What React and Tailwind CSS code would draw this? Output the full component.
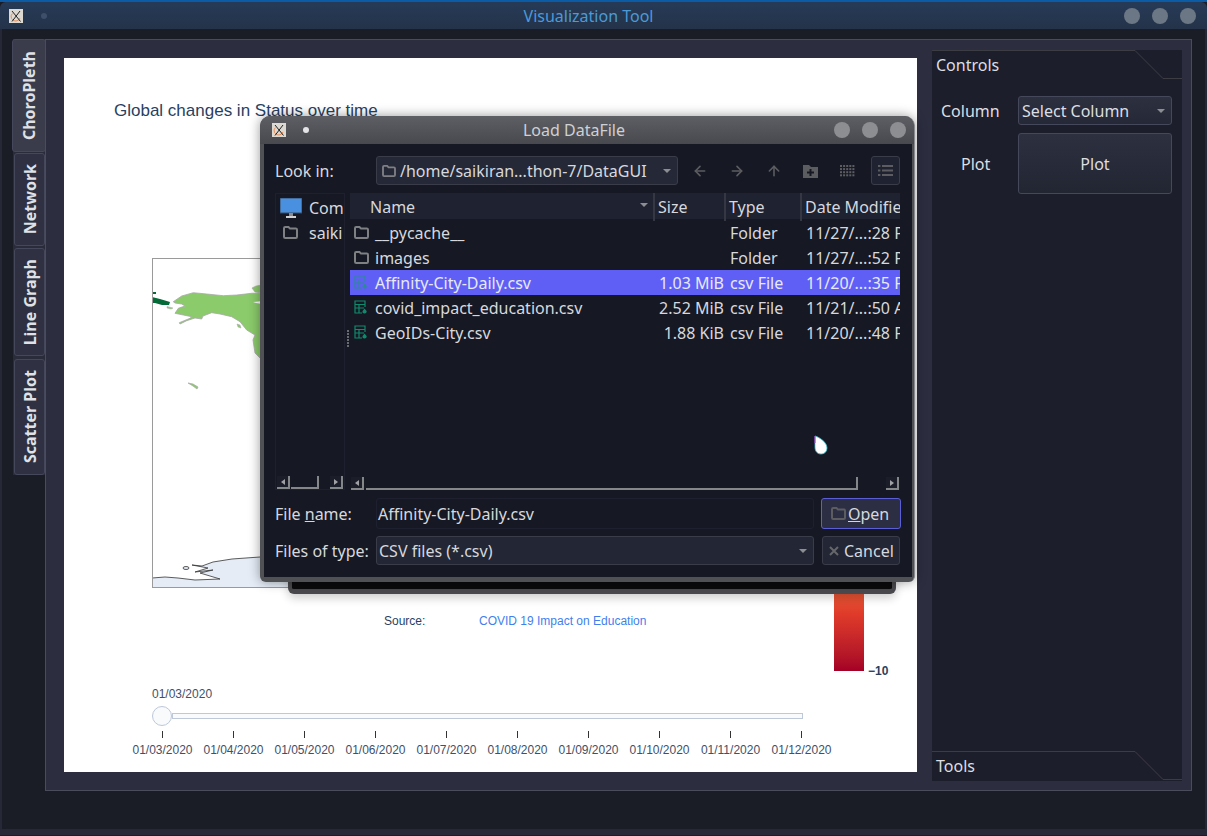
import { ArrowLeft, ArrowRight, ArrowUp } from 'lucide-react'

const dates = ['01/03/2020', '01/04/2020', '01/05/2020', '01/06/2020', '01/07/2020', '01/08/2020', '01/09/2020', '01/10/2020', '01/11/2020', '01/12/2020']

const files = [
  { name: '__pycache__', size: '', type: 'Folder', date: '11/27/...:28 P', folder: true },
  { name: 'images', size: '', type: 'Folder', date: '11/27/...:52 P', folder: true },
  { name: 'Affinity-City-Daily.csv', size: '1.03 MiB', type: 'csv File', date: '11/20/...:35 P', selected: true },
  { name: 'covid_impact_education.csv', size: '2.52 MiB', type: 'csv File', date: '11/21/...:50 A' },
  { name: 'GeoIDs-City.csv', size: '1.88 KiB', type: 'csv File', date: '11/20/...:48 P' },
]

function XLogo() {
  return (
    <svg width="14" height="14" viewBox="0 0 14 14" className="shrink-0">
      <rect width="14" height="14" fill="#dcd9d2" />
      <path d="M3.4 4.5 A4.4 4.4 0 0 0 7 12 A4.4 4.4 0 0 0 11 9" fill="none" stroke="#e8905c" strokeWidth="1" />
      <path d="M3 2 L11.5 12.5 M11 2 L3 12.5" stroke="#222" strokeWidth="1" fill="none" />
    </svg>
  )
}

function Folder({ color = '#7f8084', size = 15 }) {
  return (
    <svg width={size} height={size - 2} viewBox="0 0 15 13" fill="none" className="shrink-0">
      <path d="M1 2.2 C1 1.4 1.5 1 2.2 1 H5.5 L7 2.6 H12.8 C13.5 2.6 14 3.1 14 3.8 V10.8 C14 11.5 13.5 12 12.8 12 H2.2 C1.5 12 1 11.5 1 10.8 Z" stroke={color} strokeWidth="2" />
    </svg>
  )
}

function CsvIcon({ color = '#0f8a6c' }) {
  return (
    <svg width="14" height="15" viewBox="0 0 14 15" fill="none" className="shrink-0">
      <path d="M1 1 H11 V4.5 H1 Z M1 1 V13 H8 M1 8 H10 M5 4.5 V13 M11 4.5 V7" stroke={color} strokeWidth="1.2" />
      <path d="M10.5 8.5 L12.6 11 A2 2 0 0 1 10.5 13.5 A2 2 0 0 1 8.6 11 Z" fill={color} />
    </svg>
  )
}

function ComboArrow() {
  return <div className="w-0 h-0 border-x-[4px] border-x-transparent border-t-[4px] border-t-[#8d8e94]" />
}

function ScrollButton({ right, className = '' }) {
  return (
    <div className={`w-[13px] h-[13px] flex items-center justify-center border-b-2 border-r-2 border-[#85868a] bg-[#1b1d29] ${className}`}>
      <div className={`w-0 h-0 border-y-[3px] border-y-transparent ${right ? 'border-l-[4px] border-l-[#a0a1a5]' : 'border-r-[4px] border-r-[#a0a1a5]'}`} />
    </div>
  )
}

function TitleDots({ color, gap }) {
  return (
    <div className={`flex ${gap}`}>
      <div className={`w-4 h-4 rounded-full ${color}`} />
      <div className={`w-4 h-4 rounded-full ${color}`} />
      <div className={`w-4 h-4 rounded-full ${color}`} />
    </div>
  )
}

function SideTab({ label, className }) {
  return (
    <div className={`flex items-center justify-center rounded-[3px] border border-[#45475a] ${className}`}>
      <span className="[writing-mode:vertical-rl] rotate-180 font-['Noto_Sans',sans-serif] font-bold text-[16px] leading-none text-[#dfe1e6] whitespace-nowrap">{label}</span>
    </div>
  )
}

function MapBox() {
  return (
    <div className="ml-[88px] w-[500px] h-[330px] border border-[#9a9a9a] bg-white overflow-hidden">
      <svg width="498" height="328" viewBox="153 259 498 328">
        <path d="M173.3 301.7 L181.7 296 L193.3 292.7 L206.7 294 L223.3 295.7 L236.7 295 L251.7 293.3 L275 293 L275 370 L260 358 L255 353 L253 340 L255 335 L246.7 330 L240 321.7 L231.7 316.7 L220 314 L211.7 312.7 L203 316 L201.7 319 L195 318 L186.7 320.7 L180 324 L179.3 322.7 L190 318.3 L191.7 316.7 L183.3 315 L175 313.3 L178.3 308.3 L185 306 L181.7 304 L175 303 Z" fill="#8bcb6b" stroke="#a8a8a8" strokeWidth="0.8" />
        <path d="M252 288 L256 286 L262 285 L262 293 L255 292 Z" fill="#8bcb6b" stroke="#a8a8a8" strokeWidth="0.6" />
        <path d="M253 302 L262 301 L262 304 L256 303 Z" fill="#ffffff" />
        <path d="M237 324 L240 325 L241 328 L238 327 Z M167 306.5 L173 308 L171 309 L167 308 Z" fill="#8bcb6b" stroke="#a8a8a8" strokeWidth="0.5" />
        <path d="M152 297 L160 299 L170 302 L169 305 L162 305 L155 303 L152 303 Z M152 292 L156 292 L156 294 L152 294 Z" fill="#046a38" />
        <path d="M188 383 L193 384 L198 387 L197 389 L193 386 Z" fill="#8bcb6b" stroke="#a8a8a8" strokeWidth="0.7" />
        <path d="M152 578 L165 577 L178 578 L195 580 L220 579 L200 573 L213 570 L195 572 L208 568 L192 565 L202 566 L213 562 L232 559 L260 557 L300 555 L300 590 L152 590 Z" fill="#e5ecf6" stroke="#333" strokeWidth="0.8" />
        <ellipse cx="186" cy="568" rx="3" ry="1.5" fill="#e5ecf6" stroke="#333" strokeWidth="0.8" />
      </svg>
    </div>
  )
}

function Chart() {
  return (
    <div className="relative w-[853px] h-[714px] bg-white font-['Liberation_Sans',sans-serif] text-[#2a3f5f] shrink-0">
      <p className="pl-[50px] pt-[43px] text-[17px] leading-5">Global changes in Status over time</p>
      <div className="mt-[137px]"><MapBox /></div>
      <div className="mt-[25px] flex text-xs leading-4">
        <span className="ml-[320px] w-[95px] text-[#2a3f5f]">Source:</span>
        <span className="text-[#3f7fee]">COVID 19 Impact on Education</span>
      </div>

      {/* colour bar sits beside the map */}
      <div className="absolute left-[770px] top-[500px] w-[30px] h-[113px] bg-gradient-to-b from-[#f07a45] via-[#df3a2a] to-[#a50026]" />
      <span className="absolute left-[804px] top-[605px] text-xs leading-4 font-bold text-[#2a3f5f]">−10</span>

      <div className="mt-[57px] ml-[88px] text-xs leading-4 text-[#3f5068]">01/03/2020</div>
      <div className="mt-[4px] ml-[88px] w-[651px] h-5 flex items-center">
        <div className="w-5 h-5 rounded-full border border-[#bec8d9] bg-[#f8fafc] shrink-0" />
        <div className="flex-1 h-[6px] border border-[#bec8d9] bg-[#f8fafc]" />
      </div>
      <div className="mt-[5px] ml-[63px] flex">
        {dates.map((d) => (
          <div key={d} className="w-[71px] flex flex-col items-center">
            <div className="w-px h-[7px] bg-[#333]" />
            <span className="mt-[4px] text-xs leading-4 text-[#3f5068] whitespace-nowrap">{d}</span>
          </div>
        ))}
      </div>
    </div>
  )
}

function Dock() {
  return (
    <div className="relative mt-[-8px] w-[250px] h-[731px] bg-[#1c1f2b] flex flex-col justify-between text-[#dcdee3] text-base font-['Noto_Sans',sans-serif]">
      <div>
        <svg width="250" height="29" className="absolute left-0 top-0" fill="none">
          <path d="M0 0.5 H203 L231 28.5 H250" stroke="#3c3d42" />
        </svg>
        <div className="h-[28px] pl-1 pt-[3px] leading-[24px]">Controls</div>
        <div className="mt-[18px] flex items-center h-[29px]">
          <span className="w-[86px] pl-[9px]">Column</span>
          <div className="w-[154px] h-[29px] rounded-[3px] border border-[#45475a] bg-gradient-to-b from-[#2d303f] to-[#252836] pl-[3px] pr-[6px] flex items-center justify-between">
            <span>Select Column</span>
            <ComboArrow />
          </div>
        </div>
        <div className="mt-[8px] flex items-center h-[61px]">
          <span className="w-[86px] pl-[29px]">Plot</span>
          <div className="w-[154px] h-[61px] rounded-[3px] border border-[#45475a] bg-gradient-to-b from-[#2d303f] to-[#222532] flex items-center justify-center">Plot</div>
        </div>
      </div>
      <div className="relative h-[30px] pl-1 pt-[3px] leading-[24px]">
        <svg width="250" height="30" className="absolute left-0 top-0" fill="none">
          <path d="M0 0.5 H203 L231 28.5 H250" stroke="#3c3d42" />
        </svg>
        Tools
      </div>
    </div>
  )
}

function FileTable() {
  return (
    <div className="w-[550px] flex flex-col">
      <div className="grid grid-cols-[305px_71px_76px_98px] h-[26px] bg-[#1f2230] text-[#d6d8de] leading-[28px] shrink-0">
        <div className="relative pl-[20px] border-r-2 border-[#353745]">
          Name
          <div className="absolute right-[5px] top-[10px]"><ComboArrow /></div>
        </div>
        <div className="pl-[3px] border-r-2 border-[#353745]">Size</div>
        <div className="pl-[3px] border-r-2 border-[#353745]">Type</div>
        <div className="pl-[3px] whitespace-nowrap overflow-hidden">Date Modifie</div>
      </div>
      <div className="flex-1 pt-px overflow-hidden">
        {files.map((f) => (
          <div key={f.name} className={`grid grid-cols-[305px_71px_76px_98px] h-[25px] items-center ${f.selected ? 'bg-[#5f5ff5] text-[#e8e9f5]' : 'text-[#d6d8de]'}`}>
            <div className="flex items-center pl-[4px] gap-[7px] whitespace-nowrap">
              <div className="w-[14px] flex justify-center">
                {f.folder ? <Folder /> : <CsvIcon color={f.selected ? '#2c8a98' : '#0f8a6c'} />}
              </div>
              {f.name}
            </div>
            <div className="text-right pr-[2px] whitespace-nowrap">{f.size}</div>
            <div className="pl-[4px] whitespace-nowrap">{f.type}</div>
            <div className="pl-[4px] whitespace-nowrap overflow-hidden">{f.date}</div>
          </div>
        ))}
      </div>
      <div className="flex h-[13px] shrink-0 mt-0">
        <ScrollButton className="ml-px" />
        <div className="w-[492px] ml-[2px] border-b-2 border-r-2 border-[#85868a]" />
        <div className="flex-1" />
        <ScrollButton right className="mr-px" />
      </div>
    </div>
  )
}

function LoadDialog() {
  return (
    <div className="absolute left-[260px] top-[116px] w-[655px] h-[466px] rounded-t-[10px] rounded-b-[6px] bg-[#505155] border-r border-[#8a8b8e] shadow-[0_0_12px_rgba(0,0,0,0.4)] flex flex-col font-['Noto_Sans',sans-serif] text-base text-[#d6d8de]">
      <div className="relative h-[28px] shrink-0 rounded-t-[10px] bg-gradient-to-b from-[#5e5f64] to-[#48494e] flex items-center pl-[12px] pr-[8px] justify-between">
        <div className="flex items-center">
          <XLogo />
          <div className="ml-[17px] w-[6px] h-[6px] rounded-full bg-[#e4e4e6]" />
        </div>
        <span className="absolute left-[-26px] right-0 text-center text-[#cfd0d4] pointer-events-none">Load DataFile</span>
        <TitleDots color="bg-[#8d8e92]" gap="gap-3" />
      </div>

      <div className="flex-1 mx-[4px] mb-[5px] mr-[2px] bg-[#161824] pt-3 pl-[11px]">
        <div className="flex items-center h-[29px]">
          <span className="w-[101px]">Look in:</span>
          <div className="w-[302px] h-[29px] rounded-[3px] border border-[#3a3c4a] bg-[#252836] flex items-center justify-between pl-[5px] pr-[6px]">
            <div className="flex items-center gap-[4px]">
              <Folder size={14} />
              <span>/home/saikiran...thon-7/DataGUI</span>
            </div>
            <ComboArrow />
          </div>
          <div className="flex items-center ml-[14px] text-[#5c5d61]">
            <ArrowLeft size={16} strokeWidth={2.4} />
            <ArrowRight size={16} strokeWidth={2.4} className="ml-[21px]" />
            <ArrowUp size={16} strokeWidth={2.4} className="ml-[21px]" />
            <svg width="15" height="14" viewBox="0 0 15 14" className="ml-[21px]">
              <path fillRule="evenodd" d="M0 1 H6 L8 3 H15 V14 H0 Z M6.5 5 V7.5 H4 V9.5 H6.5 V12 H8.5 V9.5 H11 V7.5 H8.5 V5 Z" fill="#5c5d61" />
            </svg>
            <svg width="15" height="12" viewBox="0 0 15 12" className="ml-[22px]" fill="#5c5d61">
              {[0, 1, 2, 3].map((r) => [0, 1, 2, 3, 4].map((c) => (
                <rect key={`${r}${c}`} x={c * 3.1} y={r * 3.1} width="2" height="2" />
              )))}
            </svg>
            <div className="ml-[16px] w-[29px] h-[29px] rounded-[3px] border border-[#3a3c4a] bg-[#1f2230] flex items-center justify-center">
              <svg width="15" height="11" viewBox="0 0 15 11" fill="#5c5d61">
                <path d="M0 0 H2.4 V2 H0 Z M4 0 H15 V2 H4 Z M0 4.5 H2.4 V6.5 H0 Z M4 4.5 H15 V6.5 H4 Z M0 9 H2.4 V11 H0 Z M4 9 H15 V11 H4 Z" />
              </svg>
            </div>
          </div>
        </div>

        <div className="mt-2 flex h-[297px]">
          <div className="w-[70px] border border-[#1e2030] flex flex-col overflow-hidden">
            <div className="flex-1 pt-px whitespace-nowrap">
              <div className="flex items-center h-[25px] pl-[4px] gap-[7px]">
                <svg width="22" height="20" viewBox="0 0 22 20" className="shrink-0">
                  <rect x="0" y="0" width="22" height="15" fill="#4a90e0" stroke="#3a4a60" strokeWidth="1" />
                  <rect x="9" y="15" width="4" height="3" fill="#8a8b90" />
                  <rect x="6" y="18" width="10" height="2" fill="#d0d1d4" />
                </svg>
                Com
              </div>
              <div className="flex items-center h-[25px] pl-[7px] gap-[11px]">
                <Folder size={15} />
                saiki
              </div>
            </div>
            <div className="flex h-[13px] shrink-0 pl-px">
              <ScrollButton />
              <div className="w-[28px] ml-px border-b-2 border-r-2 border-[#85868a]" />
              <div className="flex-1" />
              <ScrollButton right className="mr-px" />
            </div>
          </div>
          <div className="w-[5px] flex items-center justify-center">
            <div className="flex flex-col gap-px mb-[6px]">
              {[0, 1, 2, 3, 4, 5].map((i) => <div key={i} className="w-[2px] h-[2px] bg-[#6a6b70]" />)}
            </div>
          </div>
          <FileTable />
        </div>

        <div className="mt-2 flex items-center h-[31px]">
          <span className="w-[101px]">File <span className="underline">n</span>ame:</span>
          <div className="w-[438px] h-[31px] rounded-[3px] border border-[#1e2030] flex items-center pl-px">Affinity-City-Daily.csv</div>
          <div className="ml-[7px] w-[80px] h-[31px] rounded-[3px] border border-[#5c5ed8] bg-[#2c2e44] flex items-center pl-[9px] gap-[2px]">
            <Folder size={15} color="#5c5d61" />
            <span><span className="underline">O</span>pen</span>
          </div>
        </div>
        <div className="mt-[7px] flex items-center h-[29px]">
          <span className="w-[101px] whitespace-nowrap">Files of type:</span>
          <div className="w-[438px] h-[29px] rounded-[3px] border border-[#3a3c4a] bg-[#232634] flex items-center justify-between pl-[2px] pr-[6px]">
            <span>CSV files (*.csv)</span>
            <ComboArrow />
          </div>
          <div className="ml-2 w-[78px] h-[29px] rounded-[3px] border border-[#3a3c4a] bg-[#232634] flex items-center pl-[6px] gap-[5px]">
            <svg width="10" height="10" viewBox="0 0 10 10" stroke="#66676b" strokeWidth="2" className="shrink-0"><path d="M1 1 L9 9 M9 1 L1 9" /></svg>
            <span>Cancel</span>
          </div>
        </div>
      </div>
    </div>
  )
}

export default function App() {
  return (
    <div className="relative w-[1207px] h-[836px] overflow-hidden bg-[#1a1c26] border-t-2 border-[#0b5ca6] flex flex-col font-['Noto_Sans',sans-serif]">
      <div className="relative h-[27px] shrink-0 rounded-t-[6px] bg-gradient-to-b from-[#263a57] to-[#243349] flex items-center justify-between pl-[9px] pr-[11px]">
        <div className="flex items-center">
          <XLogo />
          <div className="ml-[18px] w-[6px] h-[6px] rounded-full bg-[#3d4f6a]" />
        </div>
        <span className="absolute left-[-30px] right-0 text-center text-base text-[#4b9ad8]">Visualization Tool</span>
        <TitleDots color="bg-[#6c7785]" gap="gap-3" />
      </div>

      <div className="flex flex-1 pl-[10px] pr-[12px] pt-[10px] border-x-2 border-b-[6px] border-[#262838] mb-px">
        <div className="flex flex-col w-[34px] shrink-0 items-end">
          <div className="w-[33px] h-[436px] bg-[#2a2c3c] flex flex-col items-end gap-px">
            <SideTab label="ChoroPleth" className="w-[34px] -ml-px h-[113px] bg-[#3a3c4c] shrink-0" />
            <SideTab label="Network" className="w-[31px] mr-px h-[93px] bg-[#2f3142] shrink-0" />
            <SideTab label="Line Graph" className="w-[31px] mr-px mt-px h-[108px] bg-[#2f3142] shrink-0" />
            <SideTab label="Scatter Plot" className="w-[31px] mr-px mt-[2px] h-[116px] bg-[#2f3142] shrink-0" />
          </div>
        </div>
        <div className="w-[1147px] h-[752px] -ml-px border border-[#4a4c5c] bg-[#2c2e40] pl-[18px] pt-[18px] flex gap-[15px]">
          <Chart />
          <Dock />
        </div>
      </div>

      {/* second window hidden behind the dialog */}
      <div className="absolute left-[288px] top-[560px] w-[608px] h-[32px] rounded-b-[6px] border-x-4 border-b-[5px] border-[#4a4a4e] bg-[#0b0b0d] shadow-[0_4px_10px_rgba(0,0,0,0.2)]" />
      <div className="absolute left-0 top-[-2px] w-[1207px] h-[836px]">
        <LoadDialog />
        <svg width="16" height="20" viewBox="0 0 16 20" className="absolute left-[813px] top-[435px]">
          <path d="M2 1 C6 2 14 7 14 13 C14 17 11 19 8 19 C4 19 2 16 2 12 Z" fill="#fff" stroke="#38c4d0" strokeWidth="0.8" />
          <path d="M2 1 L2 8" stroke="#c030c0" strokeWidth="1" />
        </svg>
      </div>
    </div>
  )
}
